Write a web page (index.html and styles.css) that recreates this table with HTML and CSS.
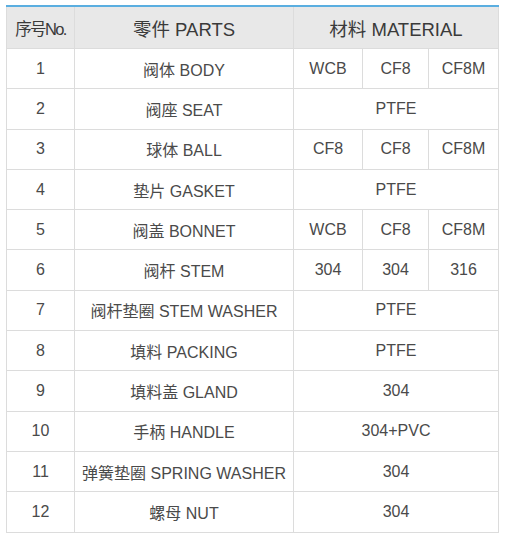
FILE: index.html
```html
<!DOCTYPE html>
<html lang="zh">
<head>
<meta charset="utf-8">
<link rel="stylesheet" href="styles.css">
</head>
<body>
<table class="spec">
  <colgroup>
    <col class="c-no"><col class="c-part"><col class="c-m1"><col class="c-m2"><col class="c-m3">
  </colgroup>
  <thead>
    <tr>
      <th class="h-no">序号No.</th>
      <th>零件 PARTS</th>
      <th colspan="3">材料 MATERIAL</th>
    </tr>
  </thead>
  <tbody>
    <tr><td>1</td><td>阀体 BODY</td><td>WCB</td><td>CF8</td><td>CF8M</td></tr>
    <tr><td>2</td><td>阀座 SEAT</td><td colspan="3">PTFE</td></tr>
    <tr><td>3</td><td>球体 BALL</td><td>CF8</td><td>CF8</td><td>CF8M</td></tr>
    <tr><td>4</td><td>垫片 GASKET</td><td colspan="3">PTFE</td></tr>
    <tr><td>5</td><td>阀盖 BONNET</td><td>WCB</td><td>CF8</td><td>CF8M</td></tr>
    <tr><td>6</td><td>阀杆 STEM</td><td>304</td><td>304</td><td>316</td></tr>
    <tr><td>7</td><td>阀杆垫圈 STEM WASHER</td><td colspan="3">PTFE</td></tr>
    <tr><td>8</td><td>填料 PACKING</td><td colspan="3">PTFE</td></tr>
    <tr><td>9</td><td>填料盖 GLAND</td><td colspan="3">304</td></tr>
    <tr><td>10</td><td>手柄 HANDLE</td><td colspan="3">304+PVC</td></tr>
    <tr><td>11</td><td>弹簧垫圈 SPRING WASHER</td><td colspan="3">304</td></tr>
    <tr><td>12</td><td>螺母 NUT</td><td colspan="3">304</td></tr>
  </tbody>
</table>
</body>
</html>
```
FILE: styles.css
```css
html, body {
  margin: 0;
  background: #ffffff;
}
body {
  padding: 5px 0 0 6px;
  font-family: "Liberation Sans", "Noto Sans CJK SC", sans-serif;
  color: #4a4a4a;
}
.spec {
  border-collapse: collapse;
  table-layout: fixed;
  width: 492px;
  border-top: 2px solid #5aaee0;
}
.c-no { width: 68px; }
.c-part { width: 219px; }
.c-m1 { width: 69px; }
.c-m2 { width: 66px; }
.c-m3 { width: 70px; }
.spec th, .spec td {
  border: 1px solid #dcdcdc;
  text-align: center;
  padding: 0;
  white-space: nowrap;
}
.spec th {
  background: #e8e8e8;
  height: 41px;
  font-size: 18.5px;
  font-weight: normal;
  color: #3a3a3a;
  border-top: 2px solid #5aaee0;
}
.spec th.h-no {
  font-size: 16.5px;
  letter-spacing: -1.6px;
}
.spec td {
  height: 39.3px;
  font-size: 16px;
}
```
